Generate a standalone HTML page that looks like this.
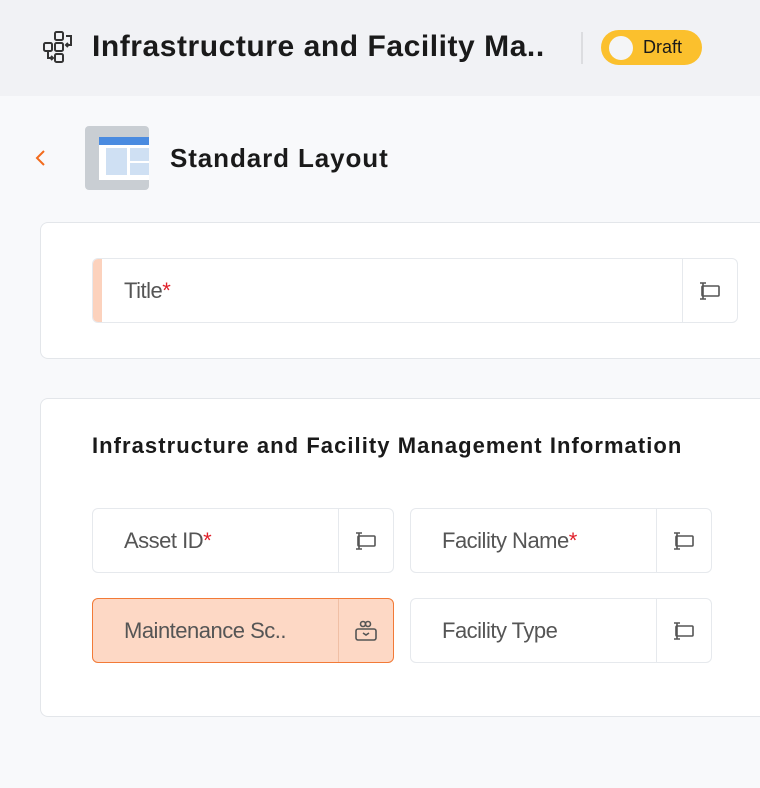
<!DOCTYPE html><html><head><style>
*{box-sizing:border-box;margin:0;padding:0}
body{width:760px;height:788px;overflow:hidden;background:#f8f9fb;font-family:"Liberation Sans",sans-serif;position:relative}
.hdr{position:absolute;left:0;top:0;width:760px;height:96px;background:#f1f2f5}
.abs{position:absolute}
.card{position:absolute;background:#fff;border:1px solid #e3e6ea;border-radius:8px;border-right:none;border-top-right-radius:0;border-bottom-right-radius:0}
.fld{position:absolute;background:#fff;border:1.5px solid #e6e9ed;border-radius:6px;font-size:22px;color:#555;letter-spacing:-0.5px}
.fld .t{position:absolute;left:31px;top:19px}
.fld .ic{position:absolute;right:0;top:0;width:55px;height:100%;border-left:1.5px solid #e6e9ed;display:flex;align-items:center;justify-content:center}
.req{color:#e0202a}
</style></head><body>
<div class="hdr"></div>
<svg class="abs" style="left:42px;top:30px" width="34" height="36" viewBox="0 0 34 36" fill="none" stroke="#333" stroke-width="2"><rect x="13" y="2" width="8" height="8" rx="1.5"/><rect x="13" y="13" width="8" height="8" rx="1.5"/><rect x="13" y="24" width="8" height="8" rx="1.5"/><rect x="2" y="13" width="8" height="8" rx="1.5"/><path d="M24 6h5v9h-5M26 13l-2 2 2 2"/><path d="M6 22v6h5M9 26l2 2-2 2"/></svg>
<div class="abs" style="left:92px;top:30px;font-size:30px;font-weight:bold;color:#1a1a1a;letter-spacing:0.55px">Infrastructure and Facility Ma..</div>
<div class="abs" style="left:581px;top:32px;width:2px;height:32px;background:#dcdde0"></div>
<div class="abs" style="left:601px;top:30px;width:101px;height:35px;border-radius:18px;background:#fbc02d"></div>
<div class="abs" style="left:609px;top:36px;width:24px;height:24px;border-radius:50%;background:#f4f5f7"></div>
<div class="abs" style="left:643px;top:37px;font-size:18px;color:#1a1a1a">Draft</div>
<svg class="abs" style="left:33px;top:148px" width="16" height="20" viewBox="0 0 16 20" fill="none" stroke="#f26b1d" stroke-width="2"><path d="M11 3L4 10l7 7"/></svg>
<div class="abs" style="left:85px;top:126px;width:64px;height:64px;background:#c9ced3;border-radius:4px"></div>
<div class="abs" style="left:99px;top:137px;width:50px;height:43px;background:#fff"></div>
<div class="abs" style="left:99px;top:137px;width:50px;height:8px;background:#4a8be0"></div>
<div class="abs" style="left:106px;top:148px;width:21px;height:27px;background:#cfe0f3"></div>
<div class="abs" style="left:130px;top:148px;width:19px;height:13px;background:#cfe0f3"></div>
<div class="abs" style="left:130px;top:163px;width:19px;height:12px;background:#cfe0f3"></div>
<div class="abs" style="left:170px;top:143px;font-size:26px;font-weight:bold;color:#1a1a1a;letter-spacing:0.9px">Standard Layout</div>
<div class="card" style="left:40px;top:222px;width:730px;height:137px"></div>
<div class="fld" style="left:92px;top:258px;width:646px;height:65px;overflow:hidden"><div class="abs" style="left:0;top:0;width:9px;height:100%;background:#fcd2bd"></div><span class="t">Title<span class="req">*</span></span><div class="ic"><svg width="24" height="20" viewBox="0 0 24 20" fill="none" stroke="#555" stroke-width="1.6"><rect x="4" y="5" width="17" height="10" rx="1"/><path d="M5 2v16M2 2h6M2 18h6"/></svg></div></div>
<div class="card" style="left:40px;top:398px;width:730px;height:319px"></div>
<div class="abs" style="left:92px;top:433px;font-size:22px;font-weight:bold;color:#1a1a1a;letter-spacing:1.05px">Infrastructure and Facility Management Information</div>
<div class="fld" style="left:92px;top:508px;width:302px;height:65px"><span class="t">Asset ID<span class="req">*</span></span><div class="ic"><svg width="24" height="20" viewBox="0 0 24 20" fill="none" stroke="#555" stroke-width="1.6"><rect x="4" y="5" width="17" height="10" rx="1"/><path d="M5 2v16M2 2h6M2 18h6"/></svg></div></div>
<div class="fld" style="left:410px;top:508px;width:302px;height:65px"><span class="t">Facility Name<span class="req">*</span></span><div class="ic"><svg width="24" height="20" viewBox="0 0 24 20" fill="none" stroke="#555" stroke-width="1.6"><rect x="4" y="5" width="17" height="10" rx="1"/><path d="M5 2v16M2 2h6M2 18h6"/></svg></div></div>
<div class="fld" style="left:92px;top:598px;width:302px;height:65px;background:#fdd8c5;border-color:#f27a37"><span class="t">Maintenance Sc..</span><div class="ic" style="border-left-color:#f0bfa5"><svg width="24" height="24" viewBox="0 0 24 24" fill="none" stroke="#555" stroke-width="1.6"><circle cx="9" cy="5" r="2.5"/><circle cx="14" cy="5" r="2.5"/><rect x="2" y="10" width="20" height="11" rx="2"/><path d="M9 14l3 2 3-2"/></svg></div></div>
<div class="fld" style="left:410px;top:598px;width:302px;height:65px"><span class="t">Facility Type</span><div class="ic"><svg width="24" height="20" viewBox="0 0 24 20" fill="none" stroke="#555" stroke-width="1.6"><rect x="4" y="5" width="17" height="10" rx="1"/><path d="M5 2v16M2 2h6M2 18h6"/></svg></div></div>
</body></html>
